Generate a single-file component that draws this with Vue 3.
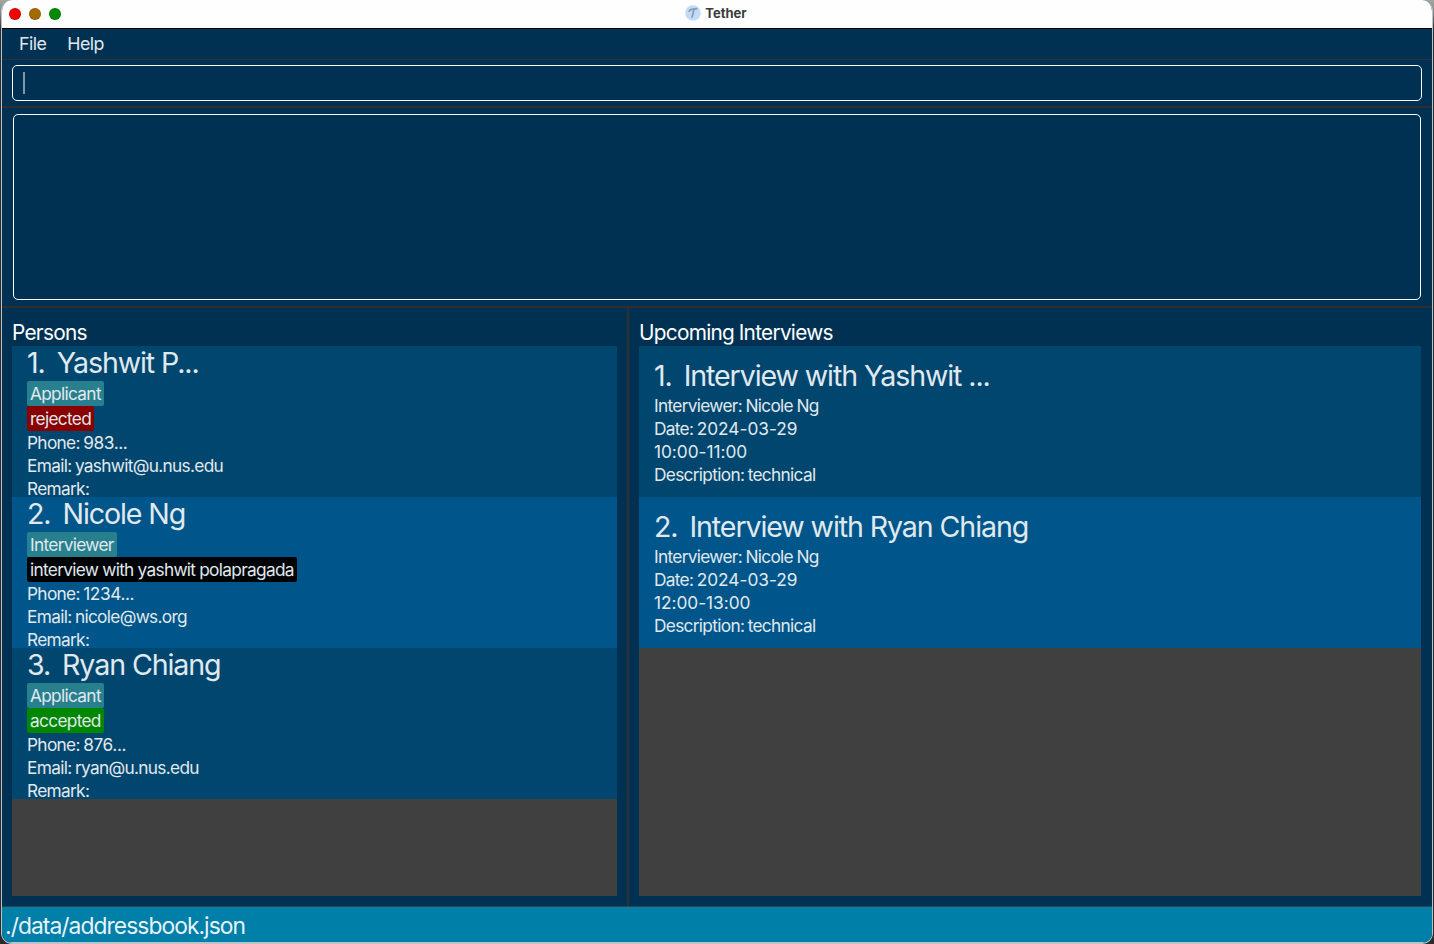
<script setup>
const persons = [
  { id: 1, name: 'Yashwit P...', role: 'Applicant', status: 'rejected', kind: 'rejected', phone: '983...', email: 'yashwit@u.nus.edu' },
  { id: 2, name: 'Nicole Ng', role: 'Interviewer', status: 'interview with yashwit polapragada', kind: 'pending', phone: '1234...', email: 'nicole@ws.org' },
  { id: 3, name: 'Ryan Chiang', role: 'Applicant', status: 'accepted', kind: 'accepted', phone: '876...', email: 'ryan@u.nus.edu' },
]
const interviews = [
  { id: 1, title: 'Interview with Yashwit ...', interviewer: 'Nicole Ng', date: '2024-03-29', time: '10:00-11:00', description: 'technical' },
  { id: 2, title: 'Interview with Ryan Chiang', interviewer: 'Nicole Ng', date: '2024-03-29', time: '12:00-13:00', description: 'technical' },
]
</script>

<template>
  <div class="desktop">
    <div class="window">
      <header class="titlebar">
        <div class="lights"><i class="red"></i><i class="amber"></i><i class="green"></i></div>
        <div class="title">
          <svg width="16" height="16" viewBox="0 0 16 16">
            <circle cx="8" cy="8" r="7.8" fill="#bfdcfb" />
            <path d="M4.200 6.200C4.700 4.500 6 4.300 7.600 4.400L11.600 3.700M8.800 4.400C8.700 7 8 9.500 7 12" fill="none" stroke="#8e98a6" stroke-width="1.700" stroke-linecap="round" />
          </svg>
          <span>Tether</span>
        </div>
      </header>
      <nav class="menu"><span>File</span><span>Help</span></nav>
      <section class="command"><div class="field"><span class="caret"></span></div></section>
      <section class="result"><div class="display"></div></section>
      <main class="panes">
        <section class="pane persons">
          <h2>Persons</h2>
          <div class="list">
            <article v-for="p in persons" :key="p.id" class="card">
              <h3><span class="num">{{ p.id }}.</span><span>{{ p.name }}</span></h3>
              <div class="tagrow"><span class="tag role">{{ p.role }}</span></div>
              <div class="tagrow"><span class="tag" :class="p.kind">{{ p.status }}</span></div>
              <p>Phone: <span class="phone">{{ p.phone }}</span></p>
              <p>Email: {{ p.email }}</p>
              <p class="last">Remark:</p>
            </article>
          </div>
        </section>
        <section class="pane interviews">
          <h2>Upcoming Interviews</h2>
          <div class="list">
            <article v-for="i in interviews" :key="i.id" class="card">
              <h3><span class="num">{{ i.id }}.</span><span>{{ i.title }}</span></h3>
              <p>Interviewer: {{ i.interviewer }}</p>
              <p>Date: <span class="digits">{{ i.date }}</span></p>
              <p><span class="digits">{{ i.time }}</span></p>
              <p>Description: {{ i.description }}</p>
            </article>
          </div>
        </section>
      </main>
      <footer class="status">./data/addressbook.json</footer>
    </div>
  </div>
</template>

<style>
body { margin: 0; }
</style>

<style scoped>
* { box-sizing: border-box; }
.desktop {
  width: 1434px;
  height: 944px;
  background: linear-gradient(180deg, #a5a5a0 0, #8a8a86 12px, #2b2b2b 30px);
  font-family: Inter, "Liberation Sans", sans-serif;
  overflow: hidden;
}
.window {
  width: 1432px;
  height: 944px;
  margin-left: 1px;
  border: 1px solid #b9c3cb;
  border-top: 0;
  border-radius: 11px;
  overflow: hidden;
  background: #003153;
  display: flex;
  flex-direction: column;
}
.titlebar {
  height: 29px;
  flex: none;
  background: #fefefe;
  border-bottom: 1px solid #000;
  display: grid;
  grid-template-columns: 1fr auto 1fr;
  align-items: center;
}
.lights { display: flex; gap: 8px; padding-left: 7px; }
.lights i { width: 12px; height: 12px; border-radius: 50%; border: 1px solid rgba(0, 0, 0, .12); }
.red { background: #f00000; }
.amber { background: #a36a00; }
.green { background: #008a00; }
.title { display: flex; align-items: center; gap: 4px; font-size: 13px; font-weight: 700; color: #3b3b3b; line-height: 16px; letter-spacing: 0; margin: -2px 2px 0 0; }
.menu {
  height: 31px;
  flex: none;
  padding-left: 17px;
  display: flex;
  gap: 21px;
  border-bottom: 1px solid #2b3138;
  color: #e0e8ee;
  font-size: 17.8px;
  line-height: 30px;
  letter-spacing: -.55px;
}
.command { height: 48px; flex: none; padding: 5px 10px 0; border-bottom: 2px solid #2f2f32; }
.field { height: 36px; border: 1px solid #fff; border-radius: 5px; padding: 6px 0 0 10px; }
.caret { display: block; width: 2px; height: 22px; background: #7f98a9; }
.result { height: 200px; flex: none; padding: 6px 11px 0; border-bottom: 2px solid #2f2f32; }
.display { height: 186px; border: 1px solid #fff; border-radius: 5px; }
.panes { flex: 1; min-height: 0; display: flex; }
.pane { padding: 12px 10px 10px; display: flex; flex-direction: column; }
.persons { width: 627px; border-right: 2px solid #2f2f32; }
.interviews { flex: 1; padding-right: 11px; }
h2 { margin: 0; height: 26px; line-height: 26px; font-size: 20.8px; font-weight: 400; color: #fff; letter-spacing: -.72px; word-spacing: -.5px; white-space: nowrap; }
.list { flex: 1; background: #404040; }
.card { height: 151px; padding-left: 15px; background: #00466e; color: #e0e9ee; font-size: 17.3px; line-height: 23px; letter-spacing: -.69px; word-spacing: -.7px; overflow: hidden; white-space: nowrap; }
.card:nth-child(even) { background: #00568a; }
h3 { margin: 0; height: 35px; line-height: 33px; font-size: 28.6px; font-weight: 400; letter-spacing: -1.1px; word-spacing: 0; display: flex; gap: 12px; }
p { margin: 0; height: 23px; line-height: 23px; }
.last { height: 20px; }
.tagrow { height: 25px; display: flex; }
.tag { height: 25px; line-height: 25px; padding: 0 3.4px 0 3px; border-radius: 2px; word-spacing: -.3px; }
.role { background: #28808f; }
.rejected { background: #8a0000; }
.pending { background: #000306; }
.accepted { background: #008700; }
.interviews .card { padding-top: 13px; }
.digits { letter-spacing: -.03px; }
.phone { letter-spacing: -.4px; }
.status { height: 37px; flex: none; background: #007fa8; border-top: 1px solid #33444d; border-bottom: 1px solid #b9c3cb; padding-left: 3px; color: #e6f3f7; font-size: 22.8px; line-height: 38px; letter-spacing: -.93px; }
</style>
